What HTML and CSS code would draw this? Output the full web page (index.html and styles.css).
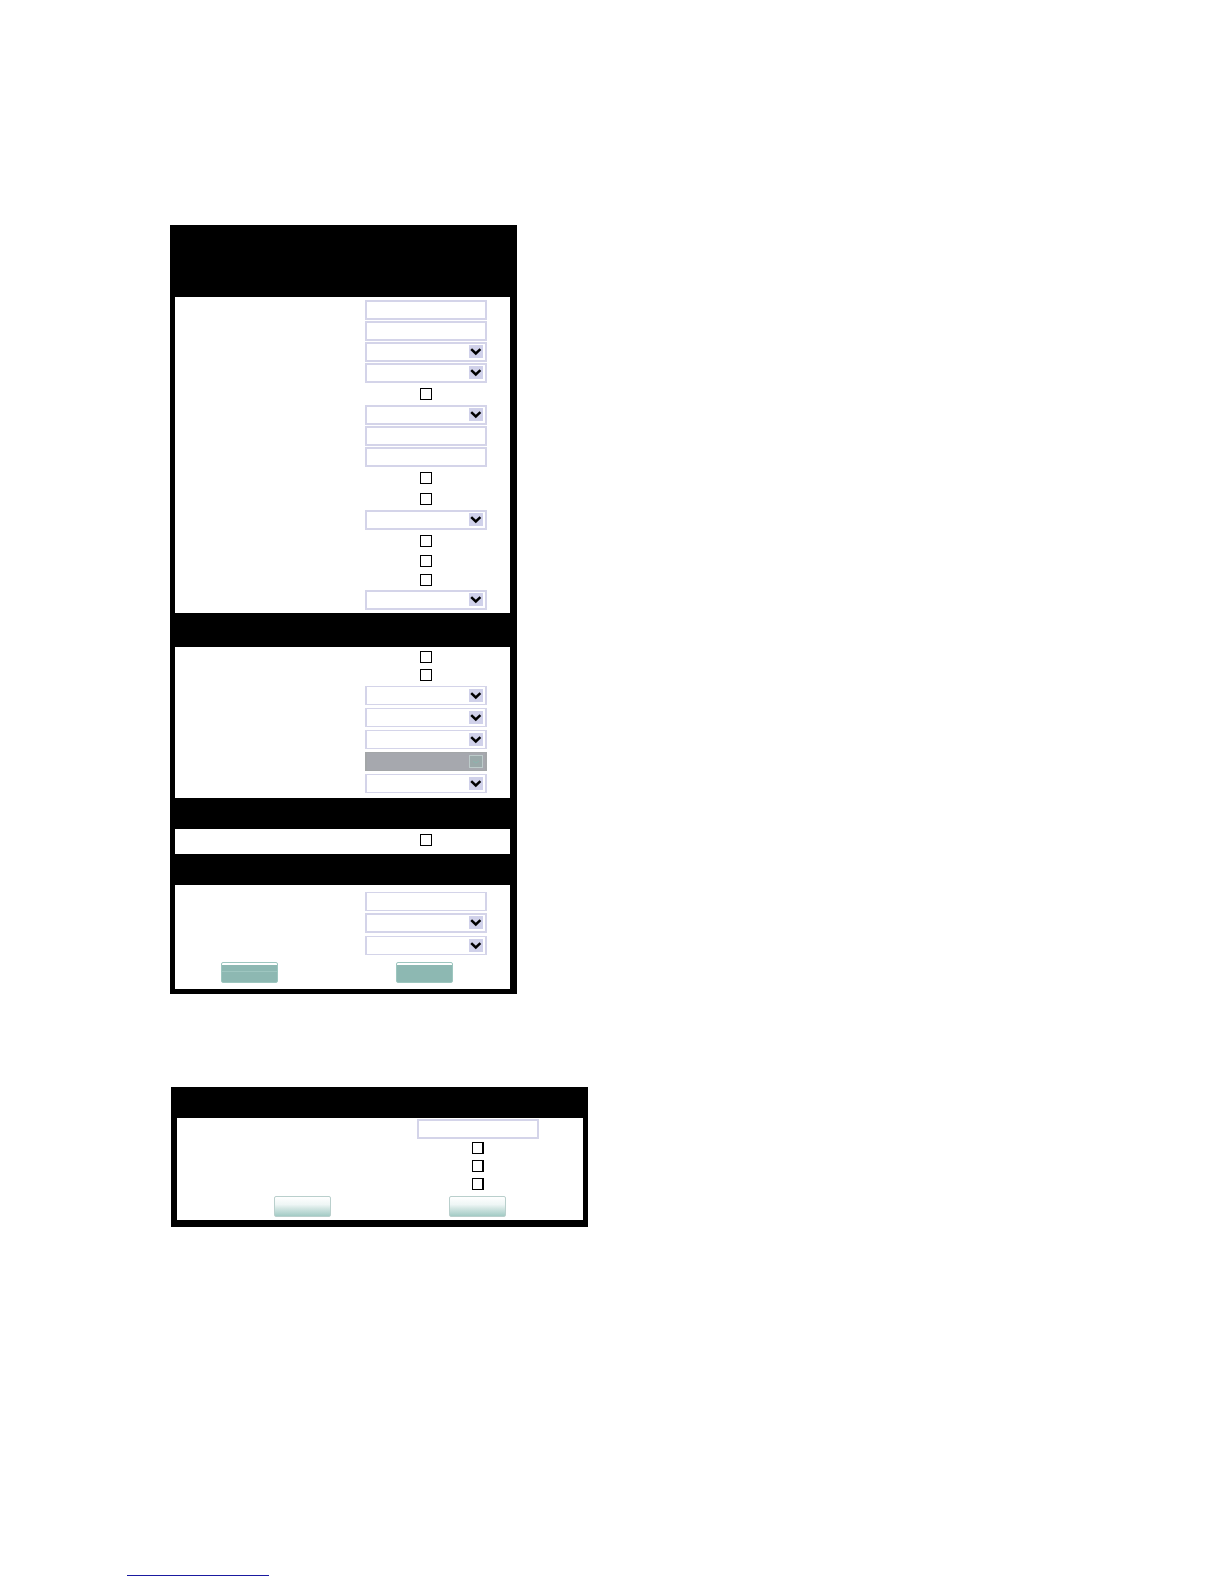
FILE: index.html
```html
<!DOCTYPE html>
<html lang="en">
<head>
    <meta charset="UTF-8">
    <meta name="viewport" content="width=device-width, initial-scale=1.0">
    <title>Settings</title>
    <link rel="stylesheet" href="styles.css">
</head>
<body>

    <!-- shared drop-down arrow -->
    <svg class="defs" aria-hidden="true">
        <symbol id="arrow" viewBox="0 0 14 13">
            <rect width="14" height="13" fill="#d0d1ea"/>
            <path d="M2.2 4.2 L6.8 8.5 L11.4 4.2" fill="none" stroke="#000" stroke-width="2.5"/>
        </symbol>
        <symbol id="arrow-off" viewBox="0 0 14 13">
            <rect x="0.5" y="0.5" width="13" height="12" fill="#9aa9a9" stroke="#bdcbca"/>
            <path d="M4 6 L7 8 L10 6" fill="none" stroke="#8bb5ae"/>
        </symbol>
    </svg>

    <main>
        <form class="panel main-panel">
            <fieldset class="group general">
                <div class="row"><input type="text" class="field" aria-label="Field 1"></div>
                <div class="row"><input type="text" class="field" aria-label="Field 2"></div>
                <div class="row">
                    <div class="dropdown"><select class="field" aria-label="Option 3"></select><svg><use href="#arrow"/></svg></div>
                </div>
                <div class="row">
                    <div class="dropdown"><select class="field" aria-label="Option 4"></select><svg><use href="#arrow"/></svg></div>
                </div>
                <div class="row"><div class="tick"><input type="checkbox" aria-label="Enable 5"></div></div>
                <div class="row">
                    <div class="dropdown"><select class="field" aria-label="Option 6"></select><svg><use href="#arrow"/></svg></div>
                </div>
                <div class="row"><input type="text" class="field" aria-label="Field 7"></div>
                <div class="row"><input type="text" class="field" aria-label="Field 8"></div>
                <div class="row"><div class="tick"><input type="checkbox" aria-label="Enable 9"></div></div>
                <div class="row"><div class="tick"><input type="checkbox" aria-label="Enable 10"></div></div>
                <div class="row">
                    <div class="dropdown"><select class="field" aria-label="Option 11"></select><svg><use href="#arrow"/></svg></div>
                </div>
                <div class="row"><div class="tick"><input type="checkbox" aria-label="Enable 12"></div></div>
                <div class="row short"><div class="tick"><input type="checkbox" aria-label="Enable 13"></div></div>
                <div class="row short"><div class="tick"><input type="checkbox" aria-label="Enable 14"></div></div>
                <div class="row">
                    <div class="dropdown"><select class="field" aria-label="Option 15"></select><svg><use href="#arrow"/></svg></div>
                </div>
            </fieldset>

            <fieldset class="group advanced">
                <div class="row tight"><div class="tick"><input type="checkbox" aria-label="Enable 16"></div></div>
                <div class="row tight"><div class="tick"><input type="checkbox" aria-label="Enable 17"></div></div>
                <div class="row tall">
                    <div class="dropdown"><select class="field thin" aria-label="Option 18"></select><svg><use href="#arrow"/></svg></div>
                </div>
                <div class="row tall">
                    <div class="dropdown"><select class="field thin" aria-label="Option 19"></select><svg><use href="#arrow"/></svg></div>
                </div>
                <div class="row tall">
                    <div class="dropdown"><select class="field thin" aria-label="Option 20"></select><svg><use href="#arrow"/></svg></div>
                </div>
                <div class="row tall">
                    <div class="dropdown"><select class="field thin" aria-label="Option 21" disabled></select><svg><use href="#arrow-off"/></svg></div>
                </div>
                <div class="row tall">
                    <div class="dropdown"><select class="field thin" aria-label="Option 22"></select><svg><use href="#arrow"/></svg></div>
                </div>
            </fieldset>

            <fieldset class="group single">
                <div class="row"><div class="tick"><input type="checkbox" aria-label="Enable 23"></div></div>
            </fieldset>

            <fieldset class="group last">
                <div class="row tall"><input type="text" class="field thin" aria-label="Field 24"></div>
                <div class="row tall">
                    <div class="dropdown"><select class="field" aria-label="Option 25"></select><svg><use href="#arrow"/></svg></div>
                </div>
                <div class="row tall">
                    <div class="dropdown"><select class="field thin" aria-label="Option 26"></select><svg><use href="#arrow"/></svg></div>
                </div>
                <div class="actions">
                    <button type="submit" class="solid lined" aria-label="Submit"></button>
                    <button type="reset" class="solid" aria-label="Reset"></button>
                </div>
            </fieldset>
        </form>

        <form class="panel small-panel">
            <fieldset class="group">
                <div class="row"><input type="text" class="field" aria-label="Field 1"></div>
                <div class="row tight"><div class="tick heavy"><input type="checkbox" aria-label="Enable 2"></div></div>
                <div class="row tight"><div class="tick heavy"><input type="checkbox" aria-label="Enable 3"></div></div>
                <div class="row tight"><div class="tick heavy"><input type="checkbox" aria-label="Enable 4"></div></div>
                <div class="actions">
                    <button type="submit" aria-label="Submit"></button>
                    <button type="reset" aria-label="Reset"></button>
                </div>
            </fieldset>
        </form>
    </main>

    <footer>
        <a href="#" aria-label="Back to top"></a>
    </footer>

</body>
</html>
```
FILE: styles.css
```css
* {
    box-sizing: border-box;
}

body {
    font-family: "Liberation Sans", Arial, sans-serif;
    margin: 0;
    min-height: 100vh;
    display: flex;
    flex-direction: column;
    background-color: #fff;
}

.defs {
    display: none;
}

main {
    padding: 225px 40px 40px 170px;
}

/* panels: black frame, white groups */
.panel {
    background-color: #000;
    width: 100%;
}

.main-panel {
    max-width: 347px;
    padding: 72px 7px 5px 5px;
}

.small-panel {
    max-width: 417px;
    margin-top: 93px;
    margin-left: 1px;
    padding: 31px 5px 7px 6px;
}

.group {
    border: 0;
    margin: 0;
    min-width: 0;
    padding: 0 23px 0 0;
    background-color: #fff;
}

.general {
    padding-top: 2px;
    padding-bottom: 3px;
}

.advanced {
    margin-top: 34px;
    padding-top: 1px;
    padding-bottom: 4px;
}

.single {
    margin-top: 31px;
    padding-bottom: 4px;
}

.last {
    margin-top: 31px;
    padding-top: 5px;
    padding-bottom: 6px;
}

.small-panel .group {
    padding-right: 44px;
    padding-bottom: 3px;
}

.row {
    display: flex;
    justify-content: flex-end;
    align-items: center;
    height: 21px;
}

.row.tall {
    height: 22px;
}

.row.short {
    height: 19px;
}

.row.tight {
    height: 18px;
}

.field {
    appearance: none;
    display: block;
    width: 122px;
    height: 20px;
    margin: 0;
    padding: 0 4px;
    border: 2px solid #d4d4e9;
    border-radius: 0;
    background-color: #fff;
    font: inherit;
    font-size: 12px;
}

.field.thin {
    height: 19px;
    border-width: 1px 2px;
}

.field:disabled {
    background-color: #a6a8ae;
    border-color: #a3a6a8;
    opacity: 1;
}

.dropdown {
    position: relative;
}

.dropdown svg {
    position: absolute;
    top: 3px;
    right: 4px;
    width: 14px;
    height: 13px;
    pointer-events: none;
}

.tick {
    display: flex;
    justify-content: center;
    width: 122px;
}

.tick input {
    appearance: none;
    width: 12px;
    height: 12px;
    margin: 0;
    border: 1px solid #000;
    background-color: #fff;
}

.tick.heavy input {
    width: 12px;
    border-right-width: 2px;
}

.actions {
    display: flex;
    gap: 118px;
    padding: 6px 0 0 46px;
}

.small-panel .actions {
    padding: 3px 0 0 97px;
}

button {
    width: 57px;
    height: 21px;
    flex-shrink: 0;
    padding: 0;
    border: 1px solid #b9cfcc;
    border-radius: 2px;
    background: linear-gradient(#fff, #eef6f5 40%, #d3e6e3 60%, #a3cbc5);
}

button.solid {
    border-color: #9dc6bf;
    background: linear-gradient(#fff 2px, #8db8b2 2px);
}

button.lined {
    background: linear-gradient(#fff 2px, #8db8b2 2px, #8db8b2 8px, #9ec6c0 8px, #9ec6c0 9px, #8db8b2 9px);
}

footer {
    margin-top: auto;
    padding: 0 40px 8px 127px;
}

footer a {
    display: block;
    width: 142px;
    height: 16px;
    border-bottom: 1px solid #1a1aa0;
}
```
